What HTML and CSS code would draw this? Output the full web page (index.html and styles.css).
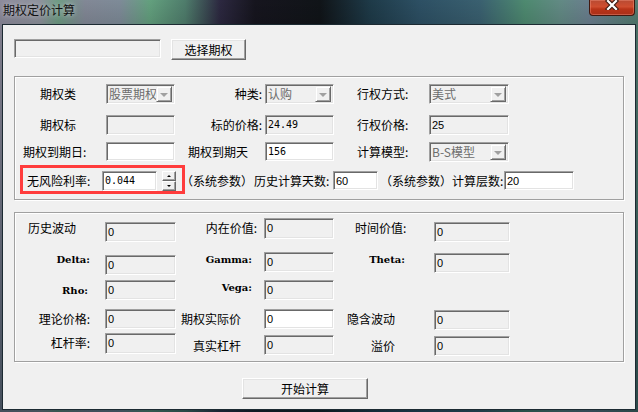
FILE: index.html
```html
<!DOCTYPE html>
<html lang="zh-CN">
<head>
  <meta charset="UTF-8" />
  <title>期权定价计算</title>
  <link rel="stylesheet" href="styles.css">
</head>
<body>
  <div class="titlebar">
    <span class="title">期权定价计算</span>
    <button class="close" aria-label="关闭">
      <svg width="14" height="10" viewBox="0 0 14 10">
        <path d="M3 1 L11 9 M11 1 L3 9" stroke="#3b1a12" stroke-width="4.4" stroke-linecap="square" fill="none"/>
        <path d="M3 1 L11 9 M11 1 L3 9" stroke="#fff" stroke-width="2.2" stroke-linecap="square" fill="none"/>
      </svg>
    </button>
  </div>

  <div class="client">
    <div class="toprow">
      <div class="field pick"></div>
      <button class="btn pick-btn">选择期权</button>
    </div>

    <div class="group g1">
      <span class="lab pl25">期权类</span>
      <div class="combo"><span>股票期权</span><i class="drop"></i></div>
      <span class="lab r pr3">种类:</span>
      <div class="combo"><span>认购</span><i class="drop"></i></div>
      <span class="lab pl23">行权方式:</span>
      <div class="combo"><span>美式</span><i class="drop"></i></div>

      <span class="lab pl25">期权标</span>
      <div class="field"></div>
      <span class="lab r pr3">标的价格:</span>
      <div class="field mono">24.49</div>
      <span class="lab pl23">行权价格:</span>
      <div class="field">25</div>

      <span class="lab pl8">期权到期日:</span>
      <div class="field white h19"></div>
      <span class="lab pl13">期权到期天</span>
      <div class="field white mono h19">156</div>
      <span class="lab pl23">计算模型:</span>
      <div class="combo"><span>B-S模型</span><i class="drop"></i></div>

      <div class="rate">
        <span class="lab rate-lab">无风险利率:</span>
        <div class="field white mono w55">0.044</div>
        <div class="spin"><i class="up"></i><i class="dn"></i></div>
        <span class="lab note1">（系统参数）</span>
        <span class="lab note2">历史计算天数:</span>
        <div class="field white w45 h19">60</div>
        <span class="lab note3">（系统参数）计算层数:</span>
        <div class="field white w70 h19">20</div>
      </div>

      <div class="mark"></div>
    </div>

    <div class="group g2">
      <span class="lab pl13">历史波动</span>
      <div class="field o4">0</div>
      <span class="lab r pr7">内在价值:</span>
      <div class="field h21">0</div>
      <span class="lab pl21">时间价值:</span>
      <div class="field o4">0</div>

      <span class="lab greek r pr15">Delta:</span>
      <div class="field o3">0</div>
      <span class="lab greek r pr12">Gamma:</span>
      <div class="field">0</div>
      <span class="lab greek r pr29">Theta:</span>
      <div class="field o1">0</div>

      <span class="lab greek r pr17 o3">Rho:</span>
      <div class="field">0</div>
      <span class="lab greek r pr12">Vega:</span>
      <div class="field">0</div>
      <span></span>
      <span></span>

      <span class="lab r pr15">理论价格:</span>
      <div class="field">0</div>
      <span class="lab r pr23">期权实际价</span>
      <div class="field white">0</div>
      <span class="lab r pr39">隐含波动</span>
      <div class="field o1">0</div>

      <span class="lab r pr15">杠杆率:</span>
      <div class="field h21">0</div>
      <span class="lab r pr23 o3">真实杠杆</span>
      <div class="field o2">0</div>
      <span class="lab r pr39 o3">溢价</span>
      <div class="field o3">0</div>
    </div>

    <button class="btn go">开始计算</button>
  </div>
</body>
</html>
```

FILE: styles.css
```css
*{margin:0;padding:0;box-sizing:border-box}
body{width:638px;height:412px;overflow:hidden;font-family:"Noto Sans CJK SC","Noto Sans",sans-serif;font-size:12px;color:#000;
  background:linear-gradient(180deg,rgba(0,0,0,0) 0,rgba(0,0,0,.1) 24px,rgba(10,30,40,.55) 100%),
  linear-gradient(90deg,#8d8b9c 0,#8e929c 40px,#6f9c84 58px,#828896 85px,#7e8b98 120px,#63a07e 150px,#4f7d6c 185px,#2c2840 220px,#16151e 255px,#101418 320px,#1e3a48 370px,#2d5064 420px,#3a6070 480px,#4e8a70 525px,#628a84 560px,#6a7e8e 590px,#527c70 638px)}
.titlebar{height:24px;display:flex;justify-content:space-between;align-items:flex-start}
.title{margin:1px 0 0 3px;line-height:17px;color:#111;text-shadow:0 0 5px rgba(225,225,235,.8)}
.close{width:46px;height:16px;margin-right:3px;border:1px solid #41180f;border-top:none;border-radius:0 0 4px 4px;background:linear-gradient(#b84a32,#cf4e30 45%,#b83418 60%,#a93019);box-shadow:inset 0 0 0 1px rgba(255,170,150,.35);display:flex;justify-content:center;align-items:flex-start;padding-top:0}
.close svg{display:block}

.client{margin-left:2px;width:634px;height:386px;border:1px solid #1c2a32;background:#f0f0f0;padding:14px 0 0 11px}
.toprow{display:flex;gap:10px;align-items:flex-start}

.field{height:20px;border:1px solid;border-color:#a0a0a0 #fff #fff #a0a0a0;box-shadow:inset 1px 1px 0 #696969,inset -1px -1px 0 #e3e3e3;background:#f0f0f0;padding:2px 2px 0;font-family:"Liberation Sans",Arial,sans-serif;font-size:11px;line-height:14px;white-space:nowrap;overflow:hidden}
.field.white{background:#fff}
.field.mono{font-family:"DejaVu Sans Mono",monospace;font-size:10px}
.h19{height:19px}
.h21{height:21px}
.w55{width:55px}
.w45{width:45px}
.w70{width:70px}
.pick{width:147px;height:19px}

.btn{background:#f0f0f0;border:1px solid;border-color:#fff #696969 #696969 #fff;box-shadow:inset -1px -1px 0 #a0a0a0,inset 1px 1px 0 #e3e3e3;font-family:"Noto Sans CJK SC",sans-serif;font-size:12px;line-height:17px;color:#000}
.pick-btn{width:75px;height:21px}
.go{display:block;margin:16px 0 0 228px;width:126px;height:21px}

.group{width:610px;border:1px solid #a0a0a0;box-shadow:inset 1px 1px 0 #fff,1px 1px 0 #fff;display:grid;align-items:start;position:relative}
.g1{margin-top:16px;padding:7px 0 8px;grid-template-columns:91px 69px 90px 69px 95px 80px;grid-template-rows:31px 27px 29px 20px}
.g2{margin-top:12px;padding:5px 0;grid-template-columns:90px 71px 88px 70px 100px 76px;grid-template-rows:34px 28px 29px 24px 23px}

.lab{height:20px;line-height:20px;white-space:nowrap}
.lab.r{text-align:right}
.greek{font-family:"DejaVu Serif",serif;font-weight:bold;font-size:10px;line-height:16px}
.pl8{padding-left:8px}
.pl13{padding-left:13px}
.pl21{padding-left:21px}
.pl23{padding-left:23px}
.pl25{padding-left:25px}
.pr3{padding-right:3px}
.pr7{padding-right:7px}
.pr12{padding-right:12px}
.pr15{padding-right:15px}
.pr17{padding-right:17px}
.pr23{padding-right:23px}
.pr29{padding-right:29px}
.pr39{padding-right:39px}
.o1{margin-top:1px}
.o2{margin-top:2px}
.o3{margin-top:3px}
.o4{margin-top:4px}

.combo{height:20px;display:flex;align-items:stretch;border:1px solid;border-color:#a0a0a0 #fff #fff #a0a0a0;box-shadow:inset 1px 1px 0 #696969,inset -1px -1px 0 #e3e3e3;background:#f0f0f0;padding:1px 1px 1px 1px}
.combo span{flex:1;color:#6d6d6d;line-height:16px;padding-left:1px;white-space:nowrap;overflow:hidden}
.drop{width:16px;border:1px solid;border-color:#f0f0f0 #696969 #696969 #f0f0f0;box-shadow:inset 1px 1px 0 #fff,inset -1px -1px 0 #a0a0a0;display:flex;align-items:center;justify-content:center;margin-right:1px}
.drop::after{content:"";border-left:4px solid transparent;border-right:4px solid transparent;border-top:4px solid #a0a0a0;margin-top:1px}

.rate{grid-column:1/-1;display:flex;align-items:flex-start;height:20px}
.rate > *{flex-shrink:0}
.rate-lab{margin-left:12px;width:75px}
.spin{margin-left:5px;width:14px;height:20px;display:flex;flex-direction:column}
.spin i{flex:1;background:#f0f0f0;border:1px solid;border-color:#fff #696969 #696969 #fff;box-shadow:inset -1px -1px 0 #a0a0a0;display:flex;align-items:center;justify-content:center}
.spin .up::after{content:"";border-left:2px solid transparent;border-right:2px solid transparent;border-bottom:2px solid #000}
.spin .dn::after{content:"";border-left:2px solid transparent;border-right:2px solid transparent;border-top:2px solid #000}
.note1{margin-left:5px;width:73px}
.note2{width:79px}
.note3{margin-left:2px;width:122px}
.rate .w70{margin-left:2px}
.mark{position:absolute;left:5px;top:88px;width:165px;height:29px;border:3px solid #ff3c3c}
```
